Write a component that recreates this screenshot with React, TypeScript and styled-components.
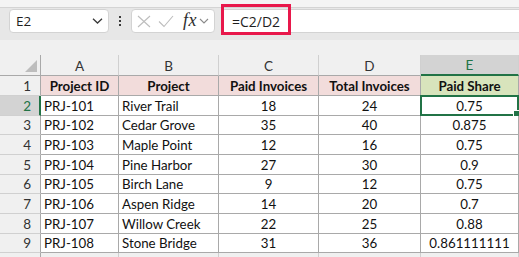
import styled, { createGlobalStyle, css } from 'styled-components'

const GREEN = '#217346'
const CELL_LINE = '#a9a9a9'
const HEAD_LINE = '#d0d0d0'

const GlobalStyle = createGlobalStyle`
  html, body {
    margin: 0;
    padding: 0;
    background: #f0f0f0;
  }
  * {
    box-sizing: border-box;
  }
`

type Row = {
  id: string
  project: string
  paid: number
  total: number
  share: string
}

const ROWS: Row[] = [
  { id: 'PRJ-101', project: 'River Trail', paid: 18, total: 24, share: '0.75' },
  { id: 'PRJ-102', project: 'Cedar Grove', paid: 35, total: 40, share: '0.875' },
  { id: 'PRJ-103', project: 'Maple Point', paid: 12, total: 16, share: '0.75' },
  { id: 'PRJ-104', project: 'Pine Harbor', paid: 27, total: 30, share: '0.9' },
  { id: 'PRJ-105', project: 'Birch Lane', paid: 9, total: 12, share: '0.75' },
  { id: 'PRJ-106', project: 'Aspen Ridge', paid: 14, total: 20, share: '0.7' },
  { id: 'PRJ-107', project: 'Willow Creek', paid: 22, total: 25, share: '0.88' },
  { id: 'PRJ-108', project: 'Stone Bridge', paid: 31, total: 36, share: '0.861111111' },
]

const COLUMNS = ['A', 'B', 'C', 'D', 'E']
const HEADERS = ['Project ID', 'Project', 'Paid Invoices', 'Total Invoices', 'Paid Share']

const App = () => {
  return (
    <>
      <GlobalStyle />
      <Window>
        <TopStrip />
        <FormulaBar>
          <NameBox>
            <span>E2</span>
            <ChevronIcon width="11" height="6" viewBox="0 0 11 6">
              <polyline points="1,0.8 5.5,5 10,0.8" />
            </ChevronIcon>
          </NameBox>
          <Dots>
            <i />
            <i />
            <i />
          </Dots>
          <FuncBox>
            <svg width="14" height="13" viewBox="0 0 14 13">
              <path d="M1 1 L13 12 M13 1 L1 12" stroke="#bdbdbd" strokeWidth="1.1" fill="none" />
            </svg>
            <svg width="16" height="13" viewBox="0 0 16 13">
              <polyline points="1,6.5 6,11.5 15,1" stroke="#bdbdbd" strokeWidth="1.1" fill="none" />
            </svg>
            <Fx>fx</Fx>
            <SmallChevron width="10" height="6" viewBox="0 0 10 6">
              <polyline points="1,1 5,5 9,1" />
            </SmallChevron>
          </FuncBox>
          <FormulaInput>=C2/D2</FormulaInput>
          <Highlight />
        </FormulaBar>
        <Spacer />
        <Sheet>
          <Corner />
          {COLUMNS.map((c) => (
            <ColHead key={c} $active={c === 'E'}>
              {c}
            </ColHead>
          ))}

          <RowHead>1</RowHead>
          {HEADERS.map((h, i) => (
            <HeadCell key={h} $green={i === 4}>
              {h}
            </HeadCell>
          ))}

          {ROWS.map((r, i) => {
            const n = i + 2
            return [
              <RowHead key={`h${n}`} $active={n === 2}>
                {n}
              </RowHead>,
              <Cell key={`a${n}`}>{r.id}</Cell>,
              <Cell key={`b${n}`}>{r.project}</Cell>,
              <Cell key={`c${n}`} $center>
                {r.paid}
              </Cell>,
              <Cell key={`d${n}`} $center>
                {r.total}
              </Cell>,
              <Cell key={`e${n}`} $center $selected={n === 2}>
                {r.share}
              </Cell>,
            ]
          })}

          <RowHead />
          <Cell $plain />
          <Cell $plain />
          <Cell $plain />
          <Cell $plain />
          <Cell $plain />
        </Sheet>
      </Window>
    </>
  )
}

export default App

const Window = styled.div`
  width: 519px;
  height: 257px;
  overflow: hidden;
  background: #f0f0f0;
  font-family: Lato, 'Open Sans', sans-serif;
`

const TopStrip = styled.div`
  height: 8px;
  background: #f4f4f4;
  border-bottom: 1px solid #d4d4d4;
  box-shadow: 0 1px 1px rgba(0, 0, 0, 0.06);
`

const FormulaBar = styled.div`
  position: relative;
  height: 32px;
  padding: 1px 0 0 9px;
  display: flex;
  align-items: flex-start;
  background: #e7e7e7;
  font-family: 'Open Sans', 'Noto Sans', sans-serif;
  font-size: 14px;
  color: #1f1f1f;
`

const boxBase = css`
  height: 24px;
  background: #ffffff;
  border: 1px solid #d3d3d3;
  border-radius: 4px;
  display: flex;
  align-items: center;
`

const NameBox = styled.div`
  ${boxBase};
  width: 100px;
  padding: 0 5px 0 6px;
  justify-content: space-between;
  font-size: 13.5px;
`

const ChevronIcon = styled.svg`
  fill: none;
  stroke: #3a3a3a;
  stroke-width: 1.3;
`

const Dots = styled.div`
  width: 22px;
  height: 24px;
  display: flex;
  flex-direction: column;
  align-items: center;
  justify-content: center;
  gap: 2px;

  i {
    display: block;
    width: 2px;
    height: 2px;
    background: #3a3a3a;
  }
`

const FuncBox = styled.div`
  ${boxBase};
  width: 84px;
  padding: 0 0 0 5px;
  gap: 8px;

  svg:first-child {
    margin-right: -1px;
  }
`

const Fx = styled.span`
  font-family: 'Liberation Serif', 'DejaVu Serif', serif;
  font-style: italic;
  font-size: 18px;
  color: #2e2e2e;
  margin-left: 1px;
  margin-top: -2px;
  letter-spacing: 0.5px;
`

const SmallChevron = styled.svg`
  fill: none;
  stroke: #8a8a8a;
  stroke-width: 1.1;
  margin-left: -6px;
`

const FormulaInput = styled.div`
  ${boxBase};
  flex: 1;
  margin-left: 6px;
  border-right: none;
  border-radius: 4px 0 0 4px;
  padding-left: 10px;
  font-size: 14px;
  color: #1f1f1f;
`

const Highlight = styled.div`
  position: absolute;
  left: 221px;
  top: -4px;
  width: 70px;
  height: 31px;
  border: 3px solid #e8184b;
  pointer-events: none;
`

const Spacer = styled.div`
  height: 15px;
`

const Sheet = styled.div`
  display: grid;
  grid-template-columns: 41px 78px 100px 100px 102px 98px;
  grid-template-rows: 21px 20px 20px 19px 20px 20px 19px 20px 20px 19px 20px;
  font-size: 13.3px;
  color: #111111;
`

const Corner = styled.div`
  position: relative;
  border-right: 1px solid ${CELL_LINE};
  border-bottom: 1px solid ${CELL_LINE};

  &::after {
    content: '';
    position: absolute;
    right: 3px;
    bottom: 3px;
    width: 12px;
    height: 12px;
    background: #bdbdbd;
    clip-path: polygon(100% 0, 100% 100%, 0 100%);
  }
`

const ColHead = styled.div<{ $active?: boolean }>`
  display: flex;
  align-items: center;
  justify-content: center;
  padding-top: 1px;
  font-size: 13.5px;
  color: ${({ $active }) => ($active ? GREEN : '#333333')};
  background: ${({ $active }) => ($active ? '#d3d3d3' : 'transparent')};
  border-right: 1px solid ${HEAD_LINE};
  border-bottom: ${({ $active }) =>
    $active ? `2px solid ${GREEN}` : `1px solid ${CELL_LINE}`};
`

const RowHead = styled.div<{ $active?: boolean }>`
  display: flex;
  align-items: center;
  justify-content: flex-end;
  padding-right: ${({ $active }) => ($active ? '8px' : '9px')};
  font-size: 13.5px;
  color: ${({ $active }) => ($active ? GREEN : '#333333')};
  background: ${({ $active }) => ($active ? '#d3d3d3' : 'transparent')};
  border-bottom: 1px solid ${HEAD_LINE};
  border-right: ${({ $active }) =>
    $active ? `2px solid ${GREEN}` : `1px solid ${CELL_LINE}`};
`

const HeadCell = styled.div<{ $green?: boolean }>`
  display: flex;
  align-items: center;
  justify-content: center;
  font-weight: 700;
  white-space: nowrap;
  background: ${({ $green }) => ($green ? '#d8e4bc' : '#f2dcdb')};
  border-right: 1px solid ${CELL_LINE};
  border-bottom: 1px solid ${CELL_LINE};
`

const Cell = styled.div<{ $center?: boolean; $selected?: boolean; $plain?: boolean }>`
  position: relative;
  display: flex;
  align-items: center;
  justify-content: ${({ $center }) => ($center ? 'center' : 'flex-start')};
  padding: 0 3px;
  white-space: nowrap;
  background: ${({ $plain }) => ($plain ? 'transparent' : '#ffffff')};
  border-right: 1px solid ${({ $plain }) => ($plain ? HEAD_LINE : CELL_LINE)};
  border-bottom: 1px solid ${({ $plain }) => ($plain ? HEAD_LINE : CELL_LINE)};

  ${({ $selected }) =>
    $selected &&
    css`
      &::before {
        content: '';
        position: absolute;
        left: -1px;
        top: -1px;
        right: -1px;
        bottom: -1px;
        border: 2px solid ${GREEN};
      }
      &::after {
        content: '';
        position: absolute;
        right: -4px;
        bottom: -4px;
        width: 7px;
        height: 7px;
        background: ${GREEN};
        border: 1px solid #ffffff;
      }
    `}
`
